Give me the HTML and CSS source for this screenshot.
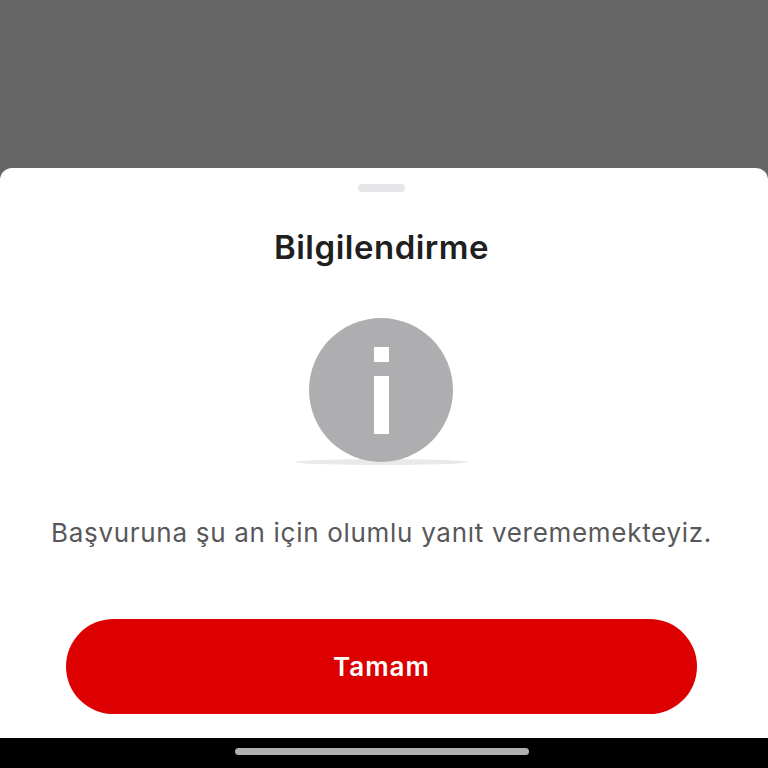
FILE: index.html
```html
<!DOCTYPE html>
<html lang="tr">
    <head>
        <title>Bilgilendirme</title>
        <meta charset="UTF-8">
        <meta name="viewport" content="width=device-width, initial-scale=1.0">
        <link rel="stylesheet" href="styles.css">
    </head>
    <body>
        <div class="backdrop"></div>

        <!-- Alt sayfa -->
        <section class="sheet">
            <div class="grabber"></div>
            <h1 class="title">Bilgilendirme</h1>
            <div class="info-icon">
                <div class="info-circle">
                    <span class="info-dot"></span>
                    <span class="info-stem"></span>
                </div>
                <div class="info-shadow"></div>
            </div>
            <p class="message">Başvuruna şu an için olumlu yanıt verememekteyiz.</p>
            <button class="primary-button" type="button">Tamam</button>
        </section>

        <div class="nav-bar">
            <div class="home-indicator"></div>
        </div>
    </body>
</html>
```

FILE: styles.css
```css
* {
    box-sizing: border-box;
}

body {
    margin: 0;
    height: 768px;
    display: flex;
    flex-direction: column;
    overflow: hidden;
    background: #000;
    font-family: Inter, "Noto Sans", sans-serif;
}

.backdrop {
    height: 180px;
    flex-shrink: 0;
    background: #656565;
}

.sheet {
    height: 570px;
    flex-shrink: 0;
    margin-top: -12px;
    background: #fff;
    border-radius: 12px 12px 0 0;
    display: flex;
    flex-direction: column;
    align-items: center;
    padding-top: 16px;
    padding-right: 5px;
}

.grabber {
    width: 47px;
    height: 8px;
    border-radius: 4px;
    background: #e6e6e8;
}

.title {
    margin: 35px 0 0;
    height: 40px;
    line-height: 40px;
    font-size: 33px;
    font-weight: 600;
    letter-spacing: 0.5px;
    color: #1f1f1f;
}

.info-icon {
    margin-top: 51px;
    display: flex;
    flex-direction: column;
    align-items: center;
}

.info-circle {
    position: relative;
    width: 144px;
    height: 144px;
    margin-right: 2px;
    border-radius: 50%;
    background: #aeadaf;
    display: flex;
    flex-direction: column;
    align-items: center;
    padding-top: 29px;
    padding-left: 2px;
    gap: 14px;
}

.info-dot {
    width: 15px;
    height: 15px;
    background: #fff;
}

.info-stem {
    width: 15px;
    height: 58px;
    background: #fff;
}

.info-shadow {
    width: 172px;
    height: 6px;
    margin-top: -3px;
    border-radius: 50%;
    background: #e9e9e9;
}

.message {
    margin: 50px 0 0;
    height: 36px;
    line-height: 36px;
    font-size: 26px;
    letter-spacing: 0.7px;
    color: #58585a;
}

.primary-button {
    margin-top: 68px;
    width: 631px;
    height: 95px;
    border: none;
    border-radius: 48px;
    background: #dc0000;
    color: #fff;
    font-family: inherit;
    font-size: 26px;
    font-weight: 600;
    letter-spacing: 1px;
}

.nav-bar {
    height: 30px;
    flex-shrink: 0;
    background: #000;
    display: flex;
    justify-content: center;
    padding-top: 10px;
    padding-right: 5px;
}

.home-indicator {
    width: 294px;
    height: 7px;
    border-radius: 4px;
    background: #b0b0b0;
}
```
